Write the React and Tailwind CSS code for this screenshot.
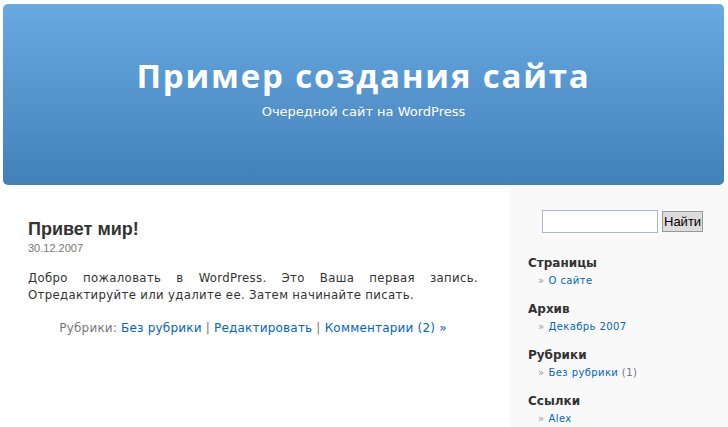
import React from 'react';

const sections = [
    { title: 'Страницы', items: [{ label: 'О сайте' }] },
    { title: 'Архив', items: [{ label: 'Декабрь 2007' }] },
    { title: 'Рубрики', items: [{ label: 'Без рубрики', count: '(1)' }] },
    { title: 'Ссылки', items: [{ label: 'Alex' }] },
];

export default function App() {
    return (
        <div className="w-[728px] h-[427px] overflow-hidden bg-white font-['DejaVu_Sans',Verdana,sans-serif]">
            <div className="pt-[4px] pl-[3px] pr-[4px]">
                <div className="h-[181px] rounded-[5px] bg-gradient-to-b from-[#69aae3] to-[#4280b8] flex flex-col items-center pt-[52px] text-white">
                    <h1 className="text-[33px] leading-[40px] font-bold font-['Open_Sans',sans-serif] tracking-[1.8px]">Пример создания сайта</h1>
                    <p className="text-[13px] leading-[15px] mt-[8px]">Очередной сайт на WordPress</p>
                </div>
            </div>

            <div className="flex">
                {/* основная колонка */}
                <div className="w-[510px] pl-[28px] pr-[32px] pt-[33px]">
                    <h2 className="text-[18px] leading-[22px] font-bold text-[#333] font-['Liberation_Sans',Arial,sans-serif]">Привет мир!</h2>
                    <div className="mt-[2px] text-[11px] leading-[13px] text-[#777] font-['Liberation_Sans',Arial,sans-serif]">30.12.2007</div>
                    <p className="mt-[14px] text-[13px] leading-[17px] text-[#333] text-justify tracking-[0.35px] font-['DejaVu_Sans_Condensed','DejaVu_Sans',sans-serif]">
                        Добро пожаловать в WordPress. Это Ваша первая запись. Отредактируйте или удалите ее. Затем начинайте писать.
                    </p>
                    <p className="mt-[16px] text-center text-[12px] leading-[18px] text-[#777] tracking-[0.2px]">
                        Рубрики: <a className="text-[#0066cc]">Без рубрики</a> | <a className="text-[#0066cc]">Редактировать</a> | <a className="text-[#0066cc]">Комментарии (2) »</a>
                    </p>
                </div>

                {/* сайдбар */}
                <div className="flex-1 bg-[#f9f9f9] h-[242px] pl-[18px] pt-[25px]">
                    <div className="flex items-center gap-[4px] pl-[14px]">
                        <input type="text" className="w-[116px] h-[23px] border border-[#a9bcd1] bg-white" />
                        <button className="h-[21px] px-[1px] border border-[#999] bg-[#dcdcdc] text-[13px] leading-[18px] text-black font-['Liberation_Sans',Arial,sans-serif]">Найти</button>
                    </div>
                    <div className="mt-[23px] flex flex-col gap-[14px]">
                        {sections.map(s => (
                            <div key={s.title}>
                                <h3 className="text-[12px] leading-[14px] font-bold text-[#333]">{s.title}</h3>
                                <ul className="pl-[10px] mt-[4px]">
                                    {s.items.map(i => (
                                        <li key={i.label} className="text-[10px] leading-[14px] text-[#777] tracking-[0.4px]">
                                            <span className="text-[#999] mr-[4px]">»</span>
                                            <a className="text-[#0066cc]">{i.label}</a>
                                            {i.count && <span> {i.count}</span>}
                                        </li>
                                    ))}
                                </ul>
                            </div>
                        ))}
                    </div>
                </div>
            </div>
        </div>
    );
}
